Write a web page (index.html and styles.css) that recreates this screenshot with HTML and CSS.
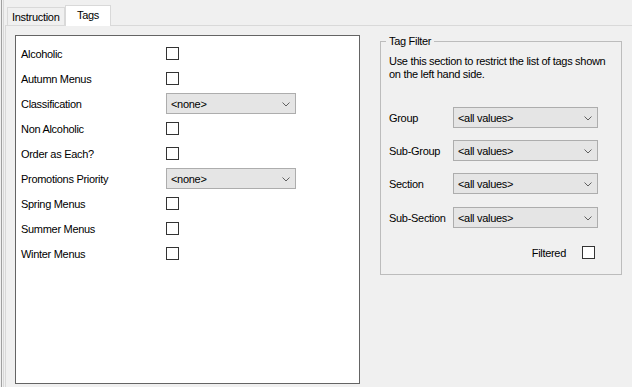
FILE: index.html
```html
<!DOCTYPE html>
<html lang="en">
<head>
  <meta charset="UTF-8">
  <title>Tags</title>
  <link rel="stylesheet" href="styles.css">
</head>
<body>
  <div class="window">
    <div class="edge"></div>
    <div class="tabs">
      <div class="tab-strip">
        <div class="tab">Instruction</div>
        <div class="tab active">Tags</div>
      </div>
      <div class="tab-page">
        <div class="tag-list">
          <div class="tag-row"><span class="tag-name">Alcoholic</span><span class="check"></span></div>
          <div class="tag-row"><span class="tag-name">Autumn Menus</span><span class="check"></span></div>
          <div class="tag-row">
            <span class="tag-name">Classification</span>
            <div class="combo"><span>&lt;none&gt;</span><svg width="8" height="5" viewBox="0 0 8 5"><polyline points="0.5,0.5 4,4 7.5,0.5" fill="none" stroke="#606060" stroke-width="1"/></svg></div>
          </div>
          <div class="tag-row"><span class="tag-name">Non Alcoholic</span><span class="check"></span></div>
          <div class="tag-row"><span class="tag-name">Order as Each?</span><span class="check"></span></div>
          <div class="tag-row">
            <span class="tag-name">Promotions Priority</span>
            <div class="combo"><span>&lt;none&gt;</span><svg width="8" height="5" viewBox="0 0 8 5"><polyline points="0.5,0.5 4,4 7.5,0.5" fill="none" stroke="#606060" stroke-width="1"/></svg></div>
          </div>
          <div class="tag-row"><span class="tag-name">Spring Menus</span><span class="check"></span></div>
          <div class="tag-row"><span class="tag-name">Summer Menus</span><span class="check"></span></div>
          <div class="tag-row"><span class="tag-name">Winter Menus</span><span class="check"></span></div>
        </div>

        <fieldset class="filter">
          <legend>Tag Filter</legend>
          <p class="hint">Use this section to restrict the list of tags shown<br>on the left hand side.</p>
          <div class="filter-grid">
            <div class="filter-row">
              <span class="filter-name">Group</span>
              <div class="combo"><span>&lt;all values&gt;</span><svg width="8" height="5" viewBox="0 0 8 5"><polyline points="0.5,0.5 4,4 7.5,0.5" fill="none" stroke="#606060" stroke-width="1"/></svg></div>
            </div>
            <div class="filter-row">
              <span class="filter-name">Sub-Group</span>
              <div class="combo"><span>&lt;all values&gt;</span><svg width="8" height="5" viewBox="0 0 8 5"><polyline points="0.5,0.5 4,4 7.5,0.5" fill="none" stroke="#606060" stroke-width="1"/></svg></div>
            </div>
            <div class="filter-row">
              <span class="filter-name">Section</span>
              <div class="combo"><span>&lt;all values&gt;</span><svg width="8" height="5" viewBox="0 0 8 5"><polyline points="0.5,0.5 4,4 7.5,0.5" fill="none" stroke="#606060" stroke-width="1"/></svg></div>
            </div>
            <div class="filter-row last">
              <span class="filter-name">Sub-Section</span>
              <div class="combo"><span>&lt;all values&gt;</span><svg width="8" height="5" viewBox="0 0 8 5"><polyline points="0.5,0.5 4,4 7.5,0.5" fill="none" stroke="#606060" stroke-width="1"/></svg></div>
            </div>
          </div>
          <div class="filtered"><span>Filtered</span><span class="check"></span></div>
        </fieldset>
      </div>
    </div>
  </div>
</body>
</html>
```

FILE: styles.css
```css
* {
  box-sizing: border-box;
}
body {
  margin: 0;
  height: 100vh;
  overflow: hidden;
  background: #f0f0f0;
  font-family: 'Liberation Sans', Arial, sans-serif;
  font-size: 11px;
  line-height: 13px;
  letter-spacing: -0.3px;
  color: #000;
}
.window {
  display: flex;
  height: 100%;
}
.edge {
  width: 3px;
  margin-left: 1px;
  border-left: 1px solid #a0a0a0;
  border-right: 1px solid #d8d8d8;
}
.tabs {
  flex: 1;
  display: flex;
  flex-direction: column;
  margin-left: 1px;
}
.tab-strip {
  height: 25px;
  display: flex;
  align-items: flex-end;
  padding-left: 2px;
}
.tab {
  width: 58px;
  height: 18px;
  padding: 1px 4px 0;
  border: 1px solid #d9d9d9;
  border-bottom: none;
  line-height: 17px;
}
.tab.active {
  position: relative;
  width: 46px;
  height: 21px;
  margin-bottom: -1px;
  padding: 0;
  background: #fff;
  text-align: center;
  line-height: 19px;
}
.tab-page {
  flex: 1;
  display: flex;
  align-items: flex-start;
  gap: 20px;
  padding: 9px 0 3px 9px;
  border-top: 1px solid #d9d9d9;
  border-left: 1px solid #d9d9d9;
}
.tag-list {
  width: 345px;
  align-self: stretch;
  background: #fff;
  border: 1px solid #646464;
  padding: 5px 0 0 5px;
}
.tag-row {
  display: flex;
  align-items: center;
  height: 25px;
}
.tag-name {
  width: 145px;
  padding-top: 2px;
}
.check {
  width: 13px;
  height: 13px;
  background: #fff;
  border: 1px solid #333;
}
.combo {
  width: 130px;
  height: 21px;
  display: flex;
  align-items: center;
  justify-content: space-between;
  padding: 1px 5px 0 4px;
  background: #e5e5e5;
  border: 1px solid #adadad;
}
.filter {
  width: 242px;
  margin: 0;
  min-inline-size: 0;
  padding: 7px 23px 15px 8px;
  border: 1px solid #bcbcbc;
}
.filter legend {
  padding: 0 3px;
  margin-left: -3px;
}
.hint {
  margin: 0;
  white-space: nowrap;
}
.filter-grid {
  margin-top: 26px;
  display: flex;
  flex-direction: column;
  gap: 12px;
}
.filter-row {
  display: flex;
  align-items: center;
}
.filter-row.last {
  margin-top: 1px;
}
.filter-name {
  width: 64px;
  padding-top: 2px;
}
.filter-row .combo {
  width: 145px;
}
.filtered {
  height: 13px;
  display: flex;
  justify-content: flex-end;
  align-items: flex-start;
  gap: 16px;
  margin-top: 18px;
  padding-right: 3px;
}
.filtered span:first-child {
  padding-top: 1px;
}
```
